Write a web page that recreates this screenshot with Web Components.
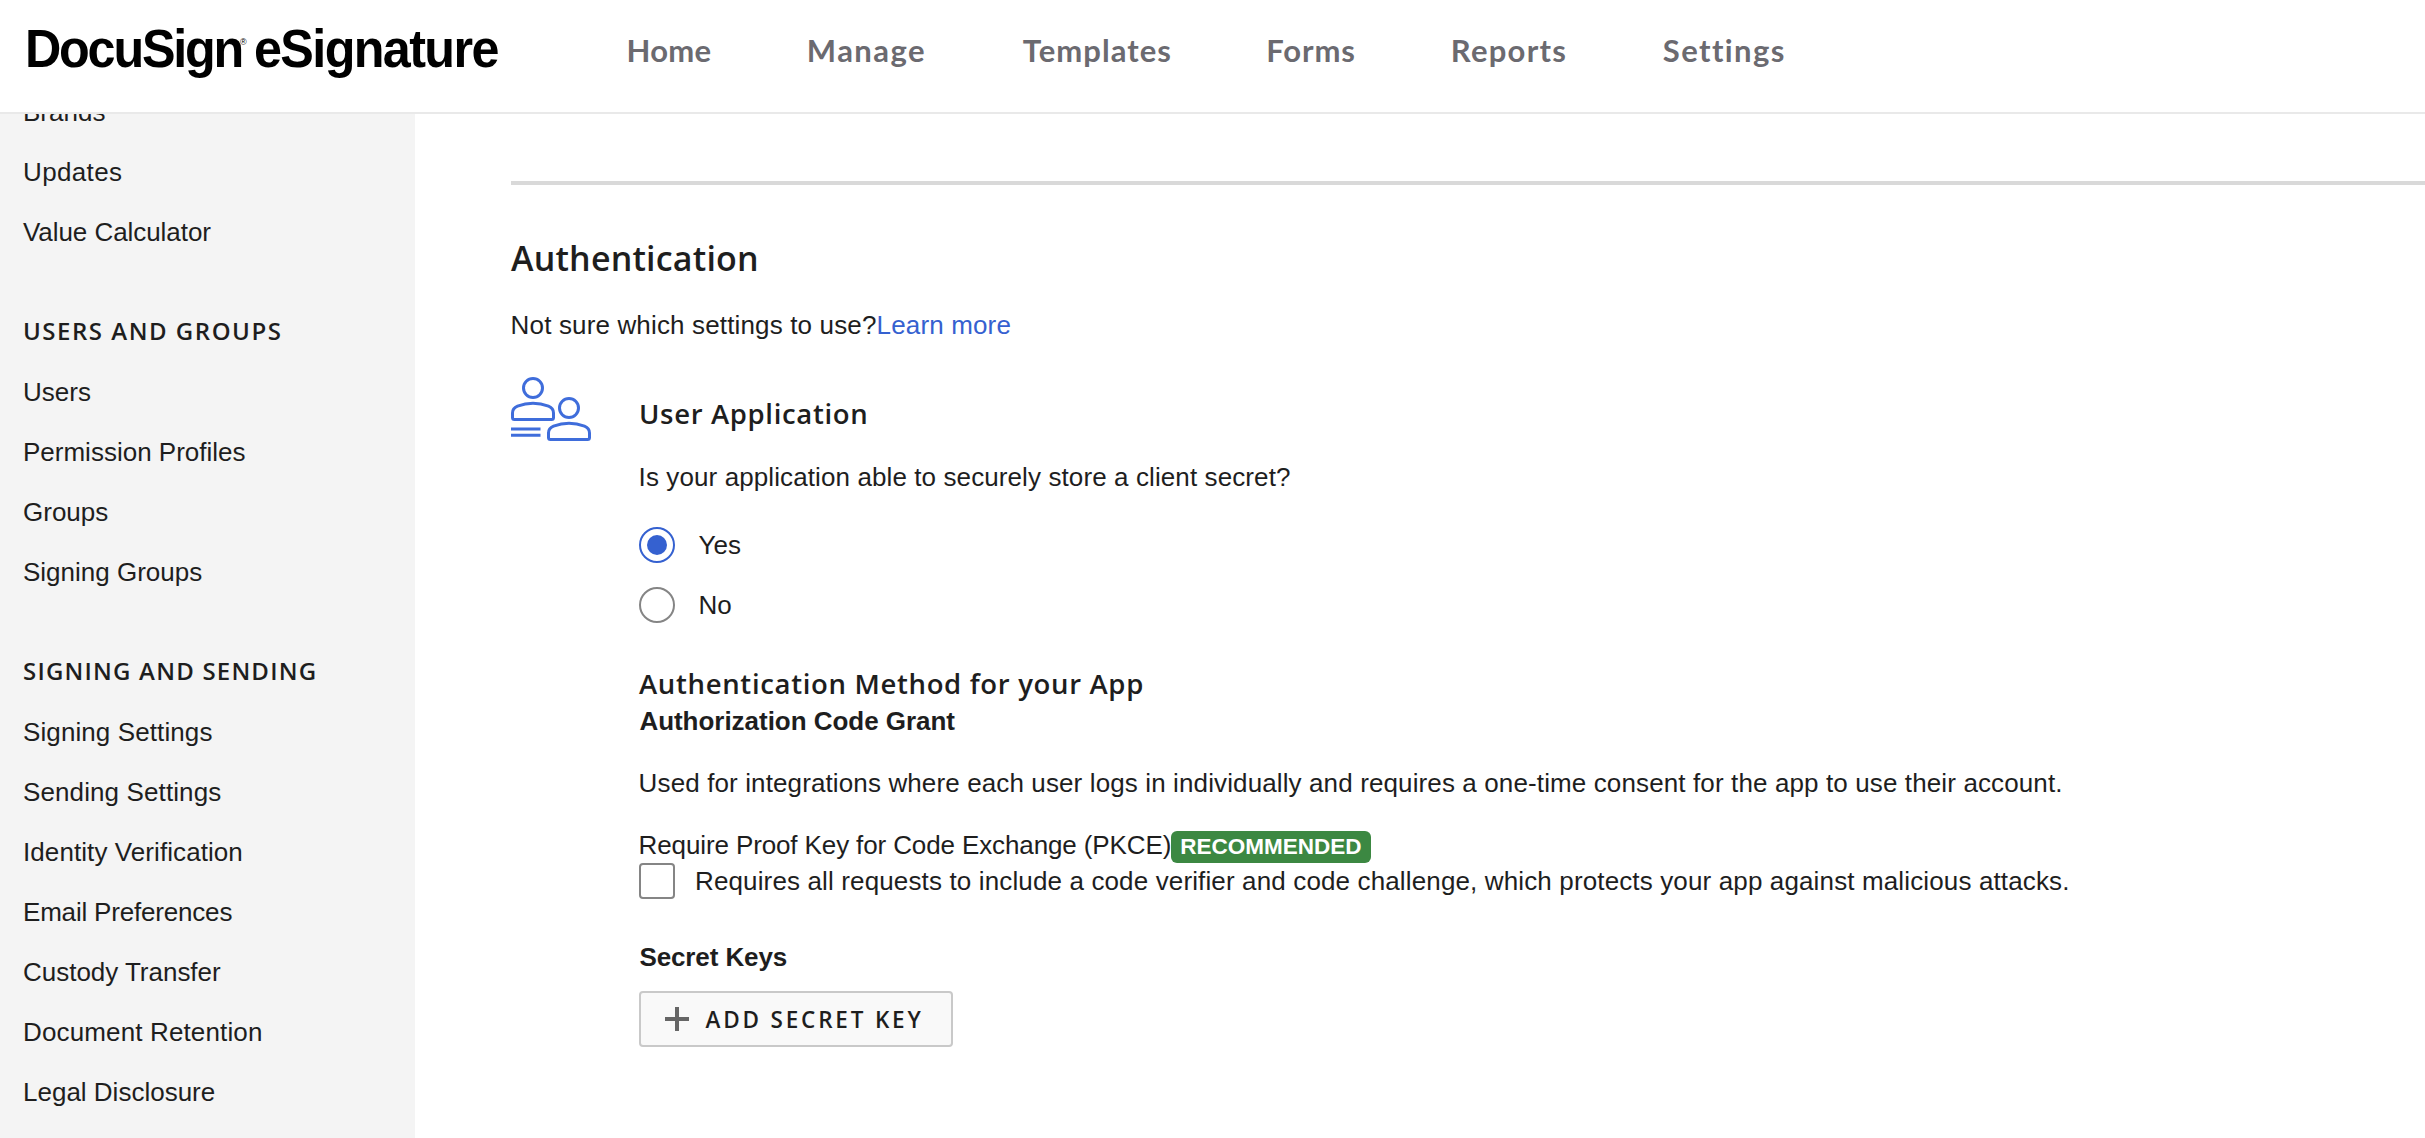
<!DOCTYPE html>
<html lang="en">
<head>
<meta charset="utf-8">
<title>DocuSign eSignature</title>
<style>
  html, body { margin: 0; height: 100%; }
  body { background: #fff; color: #1e1e1e; font-family: "Liberation Sans", Arial, sans-serif; font-size: 26px; overflow: hidden; }
</style>
</head>
<body>
<app-shell>
  <app-header slot="header">
    <brand-logo slot="brand"></brand-logo>
    <nav-link style="width:180.3px;letter-spacing:.27px">Home</nav-link>
    <nav-link style="width:216px;letter-spacing:1.45px">Manage</nav-link>
    <nav-link style="width:243.5px;letter-spacing:1.04px">Templates</nav-link>
    <nav-link style="width:184.5px;letter-spacing:.88px">Forms</nav-link>
    <nav-link style="width:212px;letter-spacing:1.25px">Reports</nav-link>
    <nav-link style="width:140px;letter-spacing:1.4px">Settings</nav-link>
  </app-header>
  <side-nav slot="side">
    <side-item>Brands</side-item>
    <side-item style="letter-spacing:.35px">Updates</side-item>
    <side-item style="letter-spacing:-.06px">Value Calculator</side-item>
    <side-heading style="letter-spacing:1.52px">USERS AND GROUPS</side-heading>
    <side-item>Users</side-item>
    <side-item>Permission Profiles</side-item>
    <side-item>Groups</side-item>
    <side-item>Signing Groups</side-item>
    <side-heading style="letter-spacing:1.2px">SIGNING AND SENDING</side-heading>
    <side-item style="letter-spacing:.1px">Signing Settings</side-item>
    <side-item style="letter-spacing:.11px">Sending Settings</side-item>
    <side-item style="letter-spacing:.08px">Identity Verification</side-item>
    <side-item style="letter-spacing:-.19px">Email Preferences</side-item>
    <side-item style="letter-spacing:-.02px">Custody Transfer</side-item>
    <side-item style="letter-spacing:.14px">Document Retention</side-item>
    <side-item>Legal Disclosure</side-item>
  </side-nav>
  <auth-settings></auth-settings>
</app-shell>

<script>
const define = (name, html) => {
  const template = document.createElement('template');
  template.innerHTML = html;
  customElements.define(name, class extends HTMLElement {
    constructor() {
      super();
      this.attachShadow({ mode: 'open' }).append(template.content.cloneNode(true));
    }
  });
};

define('app-shell', `
  <style>
    :host { display: flex; flex-direction: column; height: 100vh; overflow: hidden; }
    .body { display: flex; flex: 1; min-height: 0; }
    main { flex: 1; min-width: 0; padding-left: 96px; overflow: hidden; }
  </style>
  <slot name="header"></slot>
  <div class="body"><slot name="side"></slot><main><slot></slot></main></div>`);

define('app-header', `
  <style>
    :host { display: flex; flex: none; box-sizing: border-box; height: 114px; border-bottom: 2px solid #e9e9e9; background: #fff; }
    .brand { width: 626.5px; flex: none; }
    nav { display: flex; padding-top: 30px; }
  </style>
  <div class="brand"><slot name="brand"></slot></div>
  <nav><slot></slot></nav>`);

define('brand-logo', `
  <style>
    :host { display: flex; padding: 19px 0 0 24.6px; color: #000; font: bold 53.5px/60px "Liberation Sans", Arial, sans-serif; white-space: nowrap; }
    span { display: block; flex: none; transform: scaleX(.94); transform-origin: 0 0; }
    .first { width: 215.4px; letter-spacing: -2.35px; }
    .mark { width: 14.3px; font: 9px/10px "Liberation Sans", Arial, sans-serif; padding-top: 18px; transform: none; }
    .second { letter-spacing: -1.72px; }
  </style>
  <span class="first">DocuSign</span><span class="mark">®</span><span class="second">eSignature</span>`);

define('nav-link', `
  <style>
    :host { display: block; flex: none; font: 700 31px/40px Lato, sans-serif; color: #6b6a70; white-space: nowrap; }
  </style>
  <slot></slot>`);

define('side-nav', `
  <style>
    :host { display: block; flex: none; width: 415px; box-sizing: border-box; padding-left: 23px; background: #f4f4f4; overflow: hidden; }
    .scroll { display: flex; flex-direction: column; margin-top: -32px; }
  </style>
  <div class="scroll"><slot></slot></div>`);

define('side-item', `
  <style>:host { display: block; flex: none; line-height: 60px; white-space: nowrap; }</style>
  <slot></slot>`);

define('side-heading', `
  <style>:host { display: block; flex: none; padding: 39px 0 1px; font: 600 24px/60px "Open Sans", sans-serif; white-space: nowrap; }</style>
  <slot></slot>`);

define('text-line', `
  <style>
    :host { display: block; line-height: 36px; margin-left: -.4px; white-space: nowrap; }
    :host([strong]) { font-weight: bold; margin-left: .4px; }
  </style>
  <slot></slot>`);

define('section-title', `
  <style>
    :host { display: block; font: 600 27.5px/36px "Open Sans", sans-serif; white-space: nowrap; }
    :host([large]) { font-size: 34px; line-height: 40px; }
  </style>
  <slot></slot>`);

define('text-link', `<style>:host { display: inline; color: #3561d0; cursor: pointer; }</style><slot></slot>`);

define('radio-option', `
  <style>
    :host { display: flex; gap: 23.5px; height: 36px; line-height: 36px; }
    i { box-sizing: border-box; width: 36px; height: 36px; border: 2px solid #858585; border-radius: 50%; background: #fff; display: grid; place-items: center; }
    :host([checked]) i { border-color: #3561d0; }
    :host([checked]) i::after { content: ""; width: 20px; height: 20px; border-radius: 50%; background: #3561d0; }
  </style>
  <i></i><slot></slot>`);

define('check-option', `
  <style>
    :host { display: flex; gap: 20px; height: 36px; line-height: 36px; white-space: nowrap; }
    i { box-sizing: border-box; flex: none; width: 36px; height: 36px; border: 2px solid #858585; border-radius: 4px; background: #fff; }
  </style>
  <i></i><slot></slot>`);

define('status-badge', `
  <style>
    :host { display: block; box-sizing: border-box; width: 200px; height: 32px; border-radius: 6px; background: #3c8842; color: #fff; font-weight: bold; font-size: 22.5px; line-height: 32px; letter-spacing: 0; padding-left: 9.3px; }
  </style>
  <slot></slot>`);

define('people-icon', `
  <style>:host { display: block; flex: none; width: 80px; height: 66px; } svg { display: block; }</style>
  <svg width="80" height="66" viewBox="0 0 80 66" fill="none" stroke="#3f6ddb" stroke-width="3">
    <circle cx="22" cy="12" r="9.5"/>
    <path d="M1.5 41.5V37C1.5 33.5 3 31.6 6.500 30.200C16 26.600 28 26.600 37.500 30.200C41 31.600 42.500 33.500 42.500 37V41.500Q42.500 43.500 40.500 43.500H3.500Q1.500 43.500 1.500 41.500Z"/>
    <circle cx="58" cy="32" r="9.5"/>
    <path d="M37.500 61.500V57C37.500 53.500 39 51.600 42.500 50.200C52 46.600 64 46.600 73.500 50.200C77 51.600 78.500 53.500 78.500 57V61.500Q78.500 63.500 76.500 63.500H39.500Q37.500 63.500 37.500 61.500Z"/>
    <path d="M0 53H29.500M0 59.300H29.500"/>
  </svg>`);

define('add-button', `
  <style>
    :host { display: block; }
    button { display: flex; align-items: center; gap: 16.5px; box-sizing: border-box; width: 314px; height: 56px; margin: 0; padding: 0 0 0 24px; border: 2px solid #c9c9c9; border-radius: 4px; background: #f9f9f9; color: #1e1e1e; font: 600 22.5px/32px "Open Sans", sans-serif; letter-spacing: 2.82px; white-space: nowrap; }
    svg { display: block; flex: none; }
    span { padding-top: 2px; }
  </style>
  <button><svg width="24" height="24" viewBox="0 0 24 24"><path d="M10 0h4v10h10v4H14v10h-4V14H0v-4h10z" fill="#666"/></svg><span><slot></slot></span></button>`);

define('auth-settings', `
  <style>
    :host { display: block; padding-top: 67px; }
    hr { height: 4px; margin: 0 0 53px; border: 0; background: #d9d9d9; }
    .row { display: flex; gap: 48px; }
    people-icon { margin-top: 33px; }
    .col { display: flex; flex-direction: column; padding-top: 53px; }
    .line { display: flex; height: 36px; }
  </style>
  <hr>
  <section-title large style="margin-bottom:29px;letter-spacing:.19px">Authentication</section-title>
  <text-line style="letter-spacing:.15px">Not sure which settings to use?<text-link>Learn more</text-link></text-line>
  <div class="row">
    <people-icon></people-icon>
    <div class="col">
      <section-title style="letter-spacing:.66px">User Application</section-title>
      <text-line style="margin-top:27px;letter-spacing:.1px">Is your application able to securely store a client secret?</text-line>
      <radio-option checked style="margin-top:32px">Yes</radio-option>
      <radio-option style="margin-top:24px">No</radio-option>
      <section-title style="margin-top:43px;letter-spacing:.67px">Authentication Method for your App</section-title>
      <text-line strong style="margin-top:1px;letter-spacing:-.03px">Authorization Code Grant</text-line>
      <text-line style="margin-top:26px;letter-spacing:.12px">Used for integrations where each user logs in individually and requires a one-time consent for the app to use their account.</text-line>
      <div class="line" style="margin-top:26px">
        <text-line style="width:532.4px;letter-spacing:-.12px">Require Proof Key for Code Exchange (PKCE)</text-line>
        <status-badge style="margin-top:4px">RECOMMENDED</status-badge>
      </div>
      <check-option style="letter-spacing:.135px">Requires all requests to include a code verifier and code challenge, which protects your app against malicious attacks.</check-option>
      <text-line strong style="margin-top:40px;letter-spacing:-.1px">Secret Keys</text-line>
      <add-button style="margin-top:16px">ADD SECRET KEY</add-button>
    </div>
  </div>`);
</script>
</body>
</html>
